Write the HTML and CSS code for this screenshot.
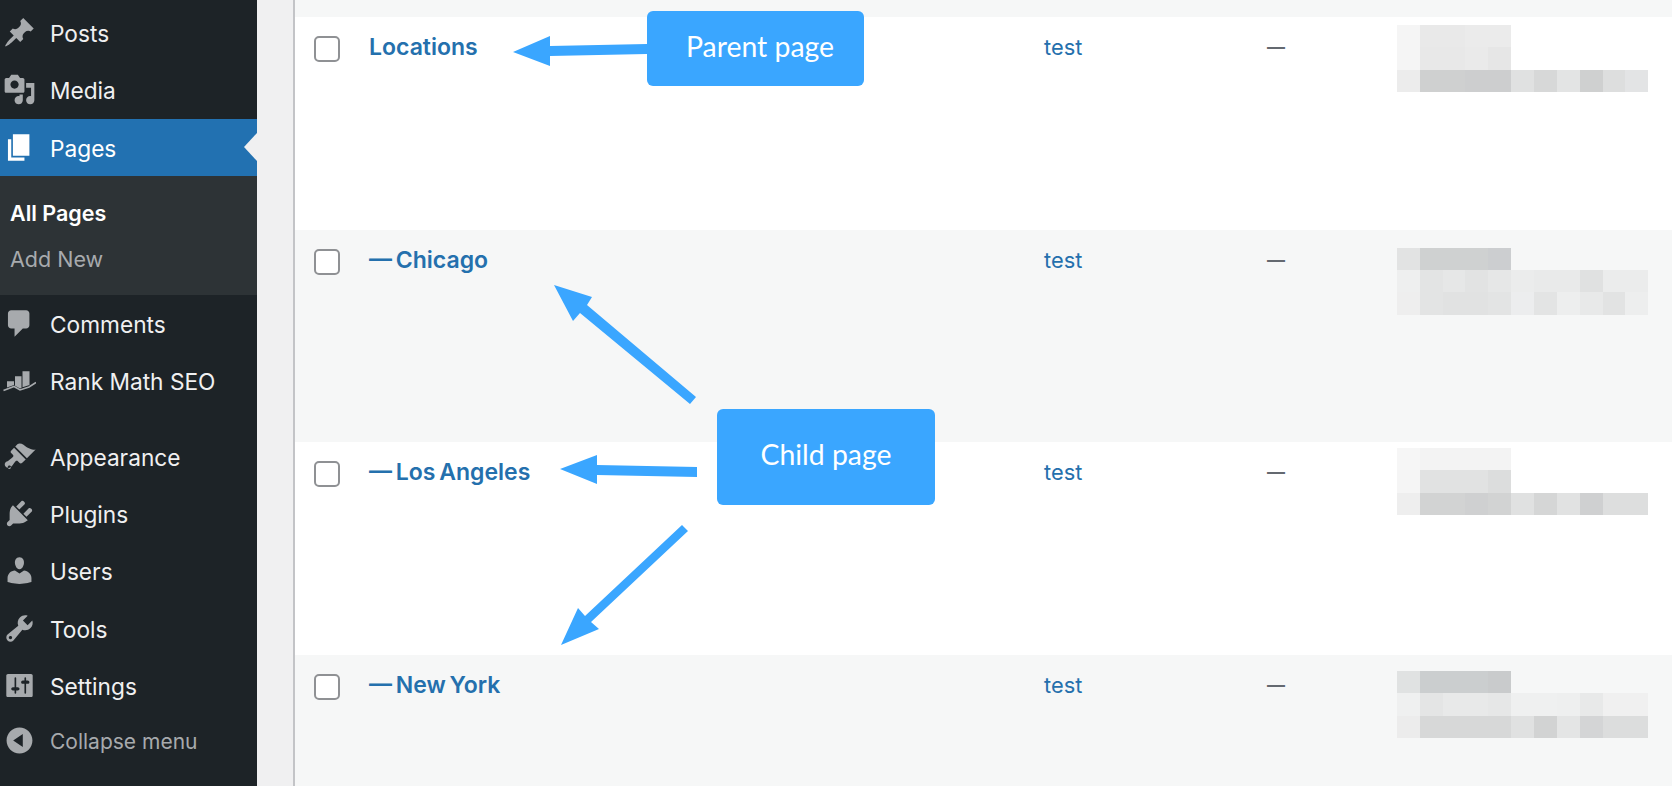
FILE: index.html
```html
<!DOCTYPE html>
<html lang="en">
<head>
  <meta charset="UTF-8" />
  <meta name="viewport" content="width=device-width, initial-scale=1" />
  <title>Pages</title>
  <link rel="stylesheet" href="styles.css">
</head>
<body>

<!-- ADMIN MENU -->
<aside class="sidebar">
  <a class="menu-item">
    <svg class="menu-icon" viewBox="0 0 20 20"><path d="M10.44 3.02l1.82-1.82 6.36 6.35-1.83 1.82c-1.05-.68-2.48-.57-3.41.36l-.75.75c-.92.93-1.04 2.35-.35 3.41l-1.83 1.82-2.41-2.41-2.8 2.79c-.42.42-3.38 2.71-3.8 2.29s1.86-3.39 2.28-3.81l2.79-2.79L4.1 9.36l1.83-1.82c1.05.69 2.48.57 3.4-.36l.75-.75c.93-.92 1.05-2.35.36-3.41z"/></svg>
    <span class="menu-label">Posts</span>
  </a>
  <a class="menu-item">
    <svg class="menu-icon" viewBox="0 0 20 20"><path d="M13 11V4c0-.55-.45-1-1-1h-1.67L9 1H5L3.67 3H2c-.55 0-1 .45-1 1v7c0 .55.45 1 1 1h10c.55 0 1-.45 1-1zM7 4.5c1.38 0 2.5 1.12 2.5 2.5S8.38 9.5 7 9.5 4.5 8.38 4.5 7 5.62 4.5 7 4.5zM14 6h5v10.5c0 1.38-1.12 2.5-2.5 2.5S14 17.88 14 16.5s1.12-2.5 2.5-2.5c.17 0 .34.02.5.05V9h-3V6zm-4 8.05V13h2v3.5c0 1.38-1.12 2.5-2.5 2.5S7 17.88 7 16.5 8.12 14 9.5 14c.17 0 .34.02.5.05z"/></svg>
    <span class="menu-label">Media</span>
  </a>
  <a class="menu-item active">
    <svg class="menu-icon" viewBox="0 0 20 20"><path d="M6 15V2h10v13H6zm-1 1h8v2H3V5h2v11z"/></svg>
    <span class="menu-label">Pages</span>
  </a>
  <div class="submenu">
    <a class="current">All Pages</a>
    <a>Add New</a>
  </div>
  <a class="menu-item">
    <svg class="menu-icon" viewBox="0 0 20 20"><path d="M5 2h9c1.1 0 2 .9 2 2v7c0 1.1-.9 2-2 2h-2l-5 5v-5H5c-1.1 0-2-.9-2-2V4c0-1.1.9-2 2-2z"/></svg>
    <span class="menu-label">Comments</span>
  </a>
  <a class="menu-item">
    <svg class="menu-icon" viewBox="0 0 33 33"><path d="M4 17.3h7v3.7l-7 2.4zM12 12.3h6.5v11.6l-1.5.5-5-2.7zM19.5 7.3h7v13.8l-7 2.2z"/><path class="rank-line" d="M.5 26.5L11 22.5l6 3.5 9-3 7-4.5"/></svg>
    <span class="menu-label">Rank Math SEO</span>
  </a>
  <a class="menu-item menu-separated">
    <svg class="menu-icon" viewBox="0 0 20 20"><path d="M14.48 11.06L7.41 3.99l1.5-1.5c.5-.56 2.3-.47 3.51.32 1.21.8 1.43 1.28 2.91 2.1 1.18.64 2.45 1.26 4.45.85zm-.71.71L6.7 4.7 4.93 6.47c-.39.39-.39 1.02 0 1.41l1.06 1.06c.39.39.39 1.03 0 1.42-.6.6-1.43 1.11-2.21 1.69-.35.26-.7.53-1.01.84C1.43 13.23.91 14.1 1.1 15.1c.08.45.29.86.6 1.17.31.31.72.52 1.17.6 1 .19 1.87-.33 2.21-.77.31-.31.58-.66.84-1.01.58-.78 1.09-1.61 1.69-2.21.39-.39 1.03-.39 1.42 0l1.06 1.06c.39.39 1.02.39 1.41 0zm-9.19 5.45c-.39.39-1.03.39-1.42 0s-.39-1.03 0-1.42 1.03-.39 1.42 0 .39 1.03 0 1.42z"/></svg>
    <span class="menu-label">Appearance</span>
  </a>
  <a class="menu-item">
    <svg class="menu-icon" viewBox="0 0 20 20"><path d="M13.11 4.36L9.87 7.6 8 5.73l3.24-3.24c.35-.34 1.05-.2 1.56.32.52.51.66 1.21.31 1.55zm-8 1.77l.91-1.12 9.01 9.01-1.19.84c-.71.71-2.63 1.16-3.82 1.16H6.14L4.9 17.26c-.59.59-1.54.59-2.12 0-.59-.58-.59-1.53 0-2.12l1.24-1.24v-3.88c0-1.13.4-3.19 1.09-3.89zm7.26 3.97l3.24-3.24c.34-.35 1.04-.21 1.55.31.52.51.66 1.21.31 1.55l-3.24 3.25z"/></svg>
    <span class="menu-label">Plugins</span>
  </a>
  <a class="menu-item">
    <svg class="menu-icon" viewBox="0 0 20 20"><path d="M10 9.25c-2.27 0-2.73-3.44-2.73-3.44C7 4.02 7.82 2 9.97 2c2.16 0 2.98 2.02 2.71 3.81 0 0-.41 3.44-2.68 3.44zm0 2.57L12.72 10c2.39 0 4.52 2.33 4.52 4.53v2.49s-3.65 1.13-7.24 1.13c-3.65 0-7.24-1.13-7.24-1.13v-2.49c0-2.25 1.94-4.48 4.47-4.48z"/></svg>
    <span class="menu-label">Users</span>
  </a>
  <a class="menu-item">
    <svg class="menu-icon" viewBox="0 0 20 20"><path d="M16.68 9.77c-1.34 1.34-3.3 1.67-4.95.99l-5.41 6.52c-.99.99-2.59.99-3.58 0s-.99-2.59 0-3.57l6.52-5.42c-.68-1.65-.35-3.61.99-4.95 1.28-1.28 3.12-1.62 4.72-1.06l-2.89 2.89 2.82 2.82 2.86-2.87c.53 1.58.18 3.39-1.08 4.65zM3.81 16.21c.4.39 1.04.39 1.43 0 .4-.4.4-1.04 0-1.43-.39-.4-1.03-.4-1.43 0-.39.39-.39 1.03 0 1.43z"/></svg>
    <span class="menu-label">Tools</span>
  </a>
  <a class="menu-item">
    <svg class="menu-icon" viewBox="0 0 20 20"><path d="M18 16V4c0-.55-.45-1-1-1H3c-.55 0-1 .45-1 1v12c0 .55.45 1 1 1h14c.55 0 1-.45 1-1zM8 11h1c.55 0 1 .45 1 1s-.45 1-1 1H8v1.5c0 .28-.22.5-.5.5s-.5-.22-.5-.5V13H6c-.55 0-1-.45-1-1s.45-1 1-1h1V5.5c0-.28.22-.5.5-.5s.5.22.5.5V11zm5-2h-1c-.55 0-1-.45-1-1s.45-1 1-1h1V5.5c0-.28.22-.5.5-.5s.5.22.5.5V7h1c.55 0 1 .45 1 1s-.45 1-1 1h-1v5.5c0 .28-.22.5-.5.5s-.5-.22-.5-.5V9z"/></svg>
    <span class="menu-label">Settings</span>
  </a>
  <a class="menu-item collapse">
    <svg class="menu-icon" viewBox="0 0 20 20"><path d="M10 2.16c4.33 0 7.84 3.51 7.84 7.84s-3.51 7.84-7.84 7.84S2.16 14.33 2.16 10 5.71 2.16 10 2.16zm2 11.72V6.12L6.18 9.97z"/></svg>
    <span class="menu-label">Collapse menu</span>
  </a>
</aside>

<!-- PAGES TABLE -->
<main class="content">
  <div class="table">
    <div class="row row-top"></div>

    <div class="row">
      <span class="check"></span>
      <a class="title">Locations</a>
      <a class="author">test</a>
      <span class="dash">—</span>
      <svg class="mosaic" viewBox="0 0 251 100" shape-rendering="crispEdges">
        <rect x="0" y="8" width="23" height="22" fill="#f5f5f5"/><rect x="23" y="8" width="45" height="22" fill="#e9e9e9"/><rect x="68" y="8" width="46" height="22" fill="#ebebeb"/>
        <rect x="0" y="30" width="23" height="23" fill="#f5f5f5"/><rect x="23" y="30" width="45" height="23" fill="#e8e8e8"/><rect x="68" y="30" width="23" height="23" fill="#eaeaea"/><rect x="91" y="30" width="23" height="23" fill="#e6e6e6"/>
        <rect x="0" y="53" width="23" height="22" fill="#ececec"/><rect x="23" y="53" width="45" height="22" fill="#cfd0d0"/><rect x="68" y="53" width="46" height="22" fill="#cdcecf"/><rect x="114" y="53" width="23" height="22" fill="#e0e1e1"/><rect x="137" y="53" width="23" height="22" fill="#d7d8d8"/><rect x="160" y="53" width="23" height="22" fill="#e3e4e4"/><rect x="183" y="53" width="23" height="22" fill="#cfd0d0"/><rect x="206" y="53" width="22" height="22" fill="#dddede"/><rect x="228" y="53" width="23" height="22" fill="#e3e4e5"/>
      </svg>
    </div>

    <div class="row">
      <span class="check"></span>
      <a class="title">— Chicago</a>
      <a class="author">test</a>
      <span class="dash">—</span>
      <svg class="mosaic" viewBox="0 0 251 100" shape-rendering="crispEdges">
        <rect x="0" y="18" width="23" height="22" fill="#e2e3e3"/><rect x="23" y="18" width="68" height="22" fill="#cfd1d1"/><rect x="91" y="18" width="23" height="22" fill="#ccced0"/>
        <rect x="0" y="40" width="23" height="22" fill="#eeefef"/><rect x="23" y="40" width="23" height="22" fill="#e3e4e4"/><rect x="46" y="40" width="22" height="22" fill="#e6e7e7"/><rect x="68" y="40" width="23" height="22" fill="#e2e3e3"/><rect x="91" y="40" width="23" height="22" fill="#e6e7e7"/><rect x="114" y="40" width="23" height="22" fill="#ebecec"/><rect x="137" y="40" width="46" height="22" fill="#e9eaea"/><rect x="183" y="40" width="23" height="22" fill="#e0e1e1"/><rect x="206" y="40" width="45" height="22" fill="#ebecec"/>
        <rect x="0" y="62" width="23" height="23" fill="#eeeeee"/><rect x="23" y="62" width="23" height="23" fill="#e3e4e4"/><rect x="46" y="62" width="45" height="23" fill="#e1e2e2"/><rect x="91" y="62" width="23" height="23" fill="#e3e4e4"/><rect x="114" y="62" width="23" height="23" fill="#ecedee"/><rect x="137" y="62" width="23" height="23" fill="#e3e4e4"/><rect x="160" y="62" width="23" height="23" fill="#edeeee"/><rect x="183" y="62" width="23" height="23" fill="#e8e9e9"/><rect x="206" y="62" width="22" height="23" fill="#e2e3e3"/><rect x="228" y="62" width="23" height="23" fill="#edeeee"/>
      </svg>
    </div>

    <div class="row">
      <span class="check"></span>
      <a class="title">— Los Angeles</a>
      <a class="author">test</a>
      <span class="dash">—</span>
      <svg class="mosaic" viewBox="0 0 251 100" shape-rendering="crispEdges">
        <rect x="0" y="6" width="23" height="22" fill="#f6f6f6"/><rect x="23" y="6" width="91" height="22" fill="#f3f3f3"/>
        <rect x="0" y="28" width="23" height="23" fill="#f5f5f5"/><rect x="23" y="28" width="68" height="23" fill="#e1e2e2"/><rect x="91" y="28" width="23" height="23" fill="#dcdddd"/>
        <rect x="0" y="51" width="23" height="22" fill="#eeeeee"/><rect x="23" y="51" width="45" height="22" fill="#d2d3d3"/><rect x="68" y="51" width="23" height="22" fill="#cfd0d1"/><rect x="91" y="51" width="23" height="22" fill="#d2d3d3"/><rect x="114" y="51" width="23" height="22" fill="#e0e1e1"/><rect x="137" y="51" width="23" height="22" fill="#d5d6d6"/><rect x="160" y="51" width="23" height="22" fill="#e1e2e2"/><rect x="183" y="51" width="23" height="22" fill="#cfd0d1"/><rect x="206" y="51" width="45" height="22" fill="#dddede"/>
      </svg>
    </div>

    <div class="row">
      <span class="check"></span>
      <a class="title">— New York</a>
      <a class="author">test</a>
      <span class="dash">—</span>
      <svg class="mosaic" viewBox="0 0 251 100" shape-rendering="crispEdges">
        <rect x="0" y="16" width="23" height="22" fill="#e0e2e2"/><rect x="23" y="16" width="68" height="22" fill="#cbcecf"/><rect x="91" y="16" width="23" height="22" fill="#c9cbcc"/>
        <rect x="0" y="38" width="23" height="23" fill="#eff0f0"/><rect x="23" y="38" width="23" height="23" fill="#e4e5e5"/><rect x="46" y="38" width="45" height="23" fill="#e8e9e9"/><rect x="91" y="38" width="23" height="23" fill="#e6e7e7"/><rect x="114" y="38" width="46" height="23" fill="#eff0f0"/><rect x="160" y="38" width="23" height="23" fill="#eeefef"/><rect x="183" y="38" width="23" height="23" fill="#e8e9e9"/><rect x="206" y="38" width="45" height="23" fill="#f0f0f0"/>
        <rect x="0" y="61" width="23" height="22" fill="#ececec"/><rect x="23" y="61" width="91" height="22" fill="#d7d8d8"/><rect x="114" y="61" width="23" height="22" fill="#e0e1e1"/><rect x="137" y="61" width="23" height="22" fill="#d2d3d3"/><rect x="160" y="61" width="23" height="22" fill="#e4e5e5"/><rect x="183" y="61" width="23" height="22" fill="#d4d5d6"/><rect x="206" y="61" width="45" height="22" fill="#dcdddd"/>
      </svg>
    </div>
  </div>

  <!-- Annotations drawn over the table -->
  <svg class="arrows" viewBox="0 0 1672 786">
    <path d="M513 52L550 36V46L647 44V54L550 56V66Z"/>
    <path d="M554 285L592 297L587 305L696 397L690 404L580 313L573 321Z"/>
    <path d="M560 469L597 455V465L697 467V477L597 475V484Z"/>
    <path d="M561 645L578 608L585 616L682 525L688 531L591 622L599 629Z"/>
  </svg>
  <div class="callout callout-parent">Parent page</div>
  <div class="callout callout-child">Child page</div>
</main>

</body>
</html>
```

FILE: styles.css
```css
:root {
  --menu-bg: #1d2327;
  --submenu-bg: #2d3336;
  --accent: #2271b1;
  --link: #2470ad;
  --page-bg: #f0f0f1;
  --row-alt: #f6f7f7;
  --callout: #3aa6ff;
}

* {
  box-sizing: border-box;
  margin: 0;
  padding: 0;
}

body {
  display: flex;
  height: 786px;
  overflow: hidden;
  background: var(--page-bg);
  font-family: Inter, 'Liberation Sans', sans-serif;
}

/* ADMIN MENU */
.sidebar {
  width: 257px;
  flex-shrink: 0;
  padding-top: 4px;
  background: var(--menu-bg);
  color: #f0f0f1;
  font-size: 22.7px;
}

.menu-item {
  position: relative;
  display: flex;
  align-items: center;
  gap: 14px;
  height: 57.33px;
  padding-left: 3px;
}

.menu-label {
  padding-top: 2px;
}

.menu-icon {
  width: 33px;
  height: 33px;
  flex-shrink: 0;
  fill: #a7aaad;
}

.rank-line {
  fill: none;
  stroke: #a7aaad;
  stroke-width: 1.6;
}

.menu-item.active {
  background: var(--accent);
  color: #fff;
}

.menu-item.active .menu-icon {
  fill: #fff;
}

/* little notch pointing at the content */
.menu-item.active::after {
  content: "";
  position: absolute;
  right: 0;
  top: 50%;
  margin-top: -14px;
  border: 14px solid transparent;
  border-left-width: 0;
  border-right: 13px solid var(--page-bg);
}

.menu-separated {
  margin-top: 18px;
}

.collapse {
  height: 53px;
  color: #a7aaad;
  font-size: 21px;
}

.submenu {
  height: 119px;
  padding: 14px 0 0 10px;
  background: var(--submenu-bg);
  font-size: 21.5px;
  color: #a7aaad;
}

.submenu a {
  display: block;
  line-height: 46px;
}

.submenu .current {
  color: #fff;
  font-weight: 600;
}

/* PAGES TABLE */
.content {
  flex: 1;
  padding-left: 36px;
}

.table {
  height: 100%;
  border-left: 2px solid #c3c4c7;
}

.row {
  display: grid;
  grid-template-columns: 74px 675px 223px 130px 1fr;
  height: 212.67px;
  padding-top: 15px;
  background: #fff;
  line-height: 30px;
}

.row:nth-child(odd) {
  background: var(--row-alt);
}

.row:last-child {
  height: 131px;
}

.row-top {
  height: 17px;
  padding: 0;
  background: var(--row-alt);
}

.check {
  display: block;
  width: 26px;
  height: 26px;
  margin: 4px 0 0 19px;
  background: #fff;
  border: 2px solid #8f9194;
  border-radius: 5px;
}

.title {
  color: var(--link);
  font-size: 23px;
  font-weight: 600;
  word-spacing: -2px;
}

.author {
  color: var(--link);
  font-size: 21.8px;
}

.dash {
  color: #646970;
  font-size: 18px;
  font-weight: 600;
}

.mosaic {
  display: block;
  width: 251px;
  height: 100px;
  margin-top: -15px;
}

/* ANNOTATIONS */
.arrows {
  position: absolute;
  top: 0;
  left: 0;
  width: 1672px;
  height: 786px;
  fill: var(--callout);
}

.callout {
  position: absolute;
  display: flex;
  align-items: center;
  justify-content: center;
  background: var(--callout);
  color: #fff;
  font-family: Lato, 'Noto Sans', sans-serif;
  font-size: 28.4px;
  border-radius: 6px;
}

.callout-parent {
  top: 11px;
  left: 647px;
  width: 217px;
  height: 75px;
  padding: 0 0 6px 9px;
}

.callout-child {
  top: 409px;
  left: 717px;
  width: 218px;
  height: 96px;
  padding-bottom: 6px;
}
```
